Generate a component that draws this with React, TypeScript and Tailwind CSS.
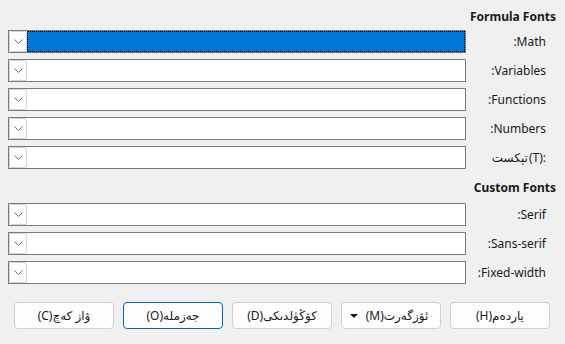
import React from "react";

const font = { fontFamily: '"Noto Sans", "DejaVu Sans", sans-serif' };

function Chevron() {
  return (
    <svg width="9" height="5" viewBox="0 0 9 5" className="block">
      <path d="M0.5 0.5 L4.5 4.5 L8.5 0.5" fill="none" stroke="#6b6b6b" strokeWidth="1" />
    </svg>
  );
}

function Row({ label, selected }: { label: React.ReactNode; selected?: boolean }) {
  return (
    <div className="flex items-center h-[23px]">
      <div className="ml-[8px] w-[458px] h-[23px] border border-[#7a7a7a] bg-white flex">
        <div className="w-[18px] h-full border border-[#d4d4d4] bg-[#fdfdfd] flex items-center justify-center rounded-[2px]">
          <Chevron />
        </div>
        {selected ? (
          <div className="flex-1 bg-[#0078d7] border border-dotted border-black" />
        ) : (
          <div className="flex-1" />
        )}
      </div>
      <div className="flex-1 flex justify-end pr-[19px] text-[12px] text-[#1a1a1a] leading-[16px] whitespace-nowrap">
        {label}
      </div>
    </div>
  );
}

function Btn({ children, primary }: { children: React.ReactNode; primary?: boolean }) {
  return (
    <div
      className={
        "w-[100px] h-[27px] rounded-[4px] bg-[#fdfdfd] flex items-center justify-center text-[12px] text-[#1a1a1a] whitespace-nowrap " +
        (primary ? "border border-[#0067c0]" : "border border-[#d0d0d0]")
      }
    >
      {children}
    </div>
  );
}

export default function App() {
  return (
    <div className="w-[565px] h-[344px] bg-[#f0f0f0] overflow-hidden" style={font}>
      <div className="pt-[9px] h-[16px] box-content text-right pr-[9px] text-[12px] font-bold leading-[16px] text-[#1a1a1a]">
        Formula Fonts
      </div>
      <div className="mt-[5px] flex flex-col gap-[6px]">
        <Row label=":Math" selected />
        <Row label=":Variables" />
        <Row label=":Functions" />
        <Row label=":Numbers" />
        <Row
          label={
            <>
              <span dir="rtl">تېكست</span>
              <span className="ml-[1px]">(T):</span>
            </>
          }
        />
      </div>
      <div className="mt-[11px] h-[16px] text-right pr-[9px] text-[12px] font-bold leading-[16px] text-[#1a1a1a]">
        Custom Fonts
      </div>
      <div className="mt-[7px] flex flex-col gap-[6px]">
        <Row label=":Serif" />
        <Row label=":Sans-serif" />
        <Row label=":Fixed-width" />
      </div>
      <div className="mt-[18px] pl-[14px] flex gap-[9px]">
        <Btn>(C)ۋاز كەچ</Btn>
        <Btn primary>(O)جەزملە</Btn>
        <Btn>(D)كۆڭۈلدىكى</Btn>
        <div className="w-[100px] h-[27px] rounded-[4px] bg-[#fdfdfd] border border-[#d0d0d0] flex items-center text-[12px] text-[#1a1a1a] whitespace-nowrap">
          <svg width="8" height="4" viewBox="0 0 8 4" className="ml-[8px]">
            <path d="M0 0 L8 0 L4 4 Z" fill="#1a1a1a" />
          </svg>
          <span className="flex-1 text-center pr-[4px]">(M)ئۆزگەرت</span>
        </div>
        <Btn>(H)ياردەم</Btn>
      </div>
    </div>
  );
}
